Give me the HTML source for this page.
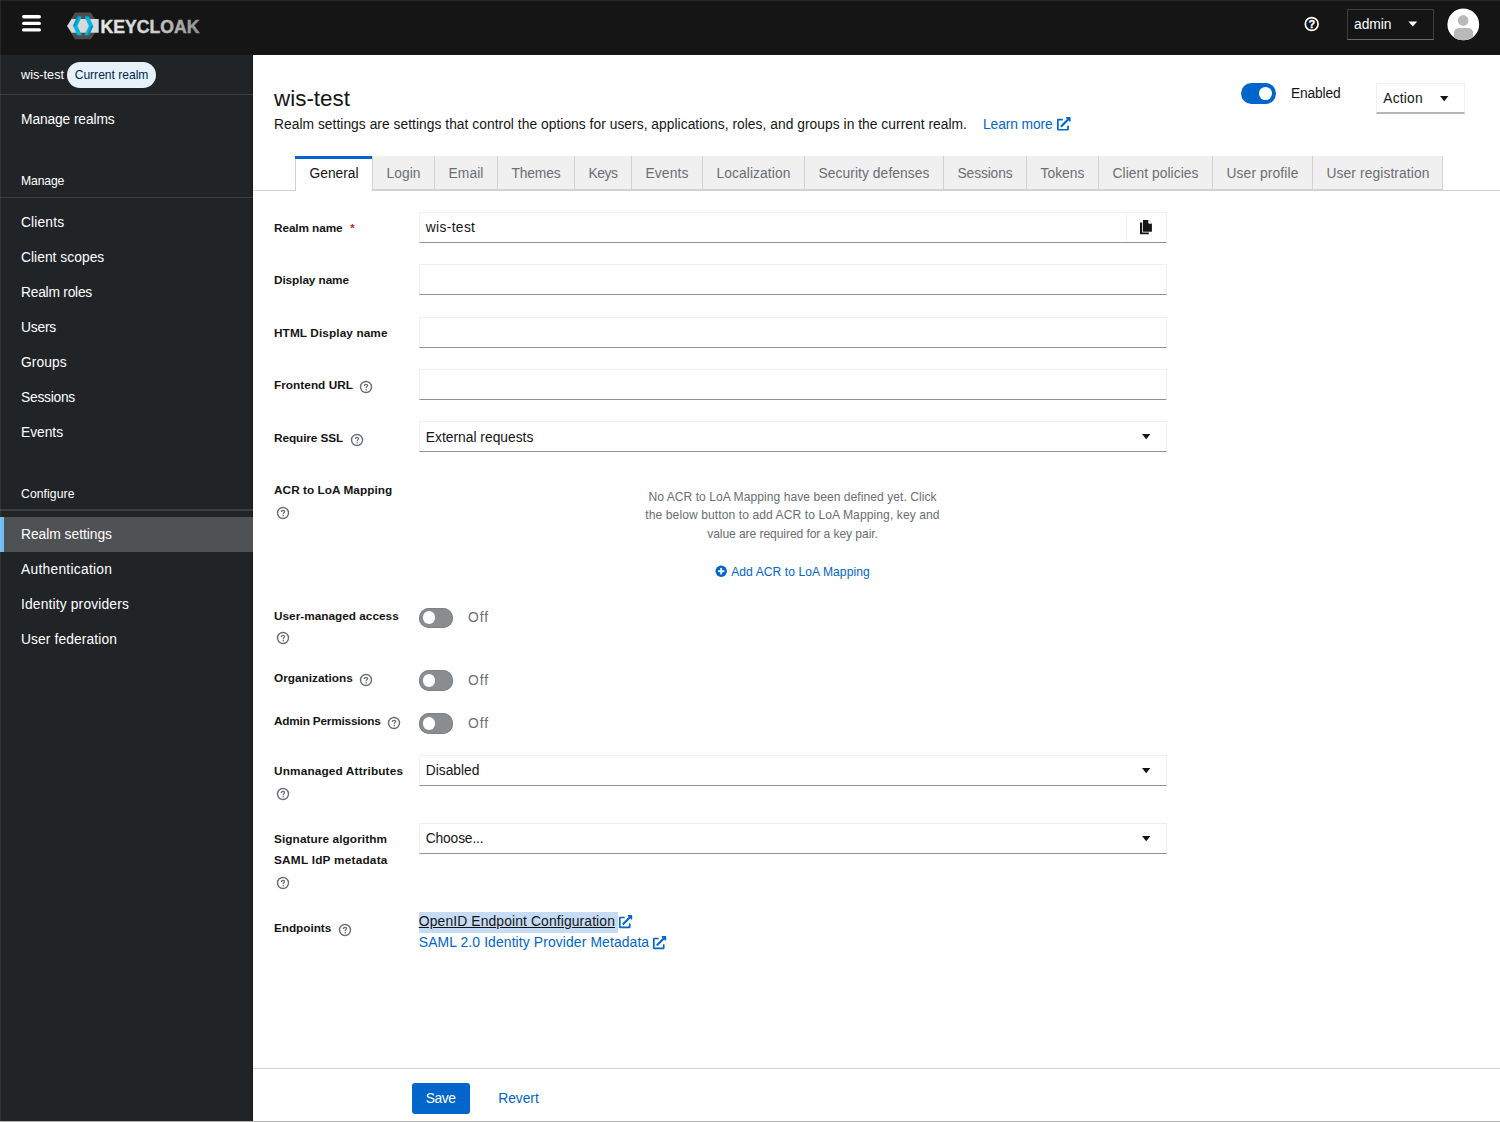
<!DOCTYPE html>
<html><head><meta charset="utf-8"><title>Keycloak - Realm settings</title>
<style>
html,body{margin:0;padding:0;width:1500px;height:1122px;overflow:hidden;background:#fff;font-family:'Liberation Sans', sans-serif}
.t{position:absolute;white-space:nowrap;font-family:'Liberation Sans', sans-serif}
svg{overflow:visible}
</style></head><body>
<div style="position:absolute;left:0px;top:0px;width:1500px;height:55px;background:#151515"></div>
<div style="position:absolute;left:0px;top:0px;width:1500px;height:1px;background:#262626"></div>
<svg style="position:absolute;left:0;top:0" width="60" height="55"><g fill="#fff"><rect x="22" y="15" width="19" height="3.4" rx="1.7"/><rect x="22" y="21.7" width="19" height="3.4" rx="1.7"/><rect x="22" y="28.2" width="19" height="3.4" rx="1.7"/></g></svg>
<svg style="position:absolute;left:60px;top:8px" width="150" height="40" viewBox="60 8 150 40">
<defs><linearGradient id="kg" x1="0" x2="1" y1="0" y2="0"><stop offset="0" stop-color="#e8e8e8"/><stop offset="0.5" stop-color="#d0d0d0"/><stop offset="1" stop-color="#909090"/></linearGradient></defs>
<polygon points="75,12.5 90.8,12.5 95,19 95,33 90.8,39.3 75,39.3 71,33 71,19" fill="#4d4d4d"/>
<polygon points="67,25.9 71.5,19 98.7,19 98.7,32.7 71.5,32.7" fill="#d9d9d9"/>
<polygon points="73,25.9 77.3,16.6 81.8,16.6 77.5,25.9 81.8,35.3 77.3,35.3" fill="#00b8e3"/>
<polygon points="93.3,25.9 89,16.6 84.5,16.6 88.8,25.9 84.5,35.3 89,35.3" fill="#00b8e3"/>
<polygon points="73,25.9 77.3,16.6 79.3,16.6 75,25.9" fill="#008fb5"/>
<polygon points="93.3,25.9 89,35.3 87,35.3 91.3,25.9" fill="#008fb5"/>
<text x="100.5" y="32.7" font-family="Liberation Sans" font-weight="bold" font-size="18.6" fill="url(#kg)" stroke="url(#kg)" stroke-width="0.45" textLength="99" lengthAdjust="spacingAndGlyphs">KEYCLOAK</text>
</svg>
<svg style="position:absolute;left:1300px;top:12px" width="24" height="24" viewBox="1300 12 24 24"><circle cx="1311.7" cy="24" r="6.4" fill="none" stroke="#fff" stroke-width="1.7"/><text x="1311.8" y="27.7" text-anchor="middle" font-family="Liberation Sans" font-weight="bold" font-size="11" fill="#fff" stroke="#fff" stroke-width="0.3">?</text></svg>
<div style="position:absolute;left:1346.5px;top:9px;width:87px;height:31px;box-sizing:border-box;border:1px solid #3c3f42;border-bottom-color:#6a6e73"></div>
<div class="t" style="left:1354px;top:15px;font-size:13.8px;line-height:20px;font-weight:normal;color:#fff;letter-spacing:-0.036px;">admin</div>
<svg style="position:absolute;left:1405px;top:19px" width="16" height="10"><polygon points="3.4,2.5 12.2,2.5 7.8,7.5" fill="#fff"/></svg>
<svg style="position:absolute;left:1445px;top:6px" width="37" height="37" viewBox="1445 6 37 37">
<defs><clipPath id="av"><circle cx="1463.3" cy="24.4" r="15.9"/></clipPath></defs>
<circle cx="1463.3" cy="24.4" r="16.6" fill="#050505"/>
<circle cx="1463.3" cy="24.4" r="15.9" fill="#fff"/>
<g clip-path="url(#av)" fill="#b9b9b9"><circle cx="1463.2" cy="20.4" r="5.3"/><path d="M1454,41 L1454,32.5 C1454,29.5 1456.5,28 1459.5,28 L1467,28 C1470.5,28 1473,29.5 1473,32.5 L1473,41 Z"/></g>
</svg>
<div style="position:absolute;left:0px;top:55px;width:253px;height:1067px;background:#212427"></div>
<div style="position:absolute;left:252px;top:55px;width:1px;height:1067px;background:#16181b"></div>
<div class="t" style="left:21px;top:65px;font-size:12.7px;line-height:20px;font-weight:normal;color:#fff;letter-spacing:0.000px;">wis-test</div>
<div style="position:absolute;left:67px;top:62px;width:89px;height:26px;background:#e7f1fa;border-radius:13px"></div>
<div class="t" style="left:74.7px;top:65px;font-size:12.1px;line-height:20px;font-weight:normal;color:#002952;letter-spacing:-0.018px;">Current realm</div>
<div style="position:absolute;left:0px;top:94px;width:253px;height:1px;background:#3c3f42"></div>
<div class="t" style="left:21px;top:110px;font-size:13.8px;line-height:20px;font-weight:normal;color:#fff;letter-spacing:-0.115px;">Manage realms</div>
<div class="t" style="left:21px;top:171px;font-size:12.2px;line-height:20px;font-weight:normal;color:#fff;letter-spacing:-0.141px;">Manage</div>
<div style="position:absolute;left:0px;top:197px;width:253px;height:1px;background:#3c3f42"></div>
<div class="t" style="left:21px;top:213px;font-size:13.8px;line-height:20px;font-weight:normal;color:#fff;letter-spacing:0.145px;">Clients</div>
<div class="t" style="left:21px;top:248px;font-size:13.8px;line-height:20px;font-weight:normal;color:#fff;letter-spacing:0.036px;">Client scopes</div>
<div class="t" style="left:21px;top:283px;font-size:13.8px;line-height:20px;font-weight:normal;color:#fff;letter-spacing:-0.237px;">Realm roles</div>
<div class="t" style="left:21px;top:318px;font-size:13.8px;line-height:20px;font-weight:normal;color:#fff;letter-spacing:-0.206px;">Users</div>
<div class="t" style="left:21px;top:353px;font-size:13.8px;line-height:20px;font-weight:normal;color:#fff;letter-spacing:0.075px;">Groups</div>
<div class="t" style="left:21px;top:388px;font-size:13.8px;line-height:20px;font-weight:normal;color:#fff;letter-spacing:-0.248px;">Sessions</div>
<div class="t" style="left:21px;top:423px;font-size:13.8px;line-height:20px;font-weight:normal;color:#fff;letter-spacing:-0.031px;">Events</div>
<div class="t" style="left:21px;top:484px;font-size:12.2px;line-height:20px;font-weight:normal;color:#fff;letter-spacing:0.082px;">Configure</div>
<div style="position:absolute;left:0px;top:509px;width:253px;height:1.5px;background:#3c3f42"></div>
<div style="position:absolute;left:0px;top:517px;width:253px;height:35px;background:#4f5255"></div>
<div style="position:absolute;left:0px;top:517px;width:4px;height:35px;background:#73bcf7"></div>
<div class="t" style="left:21px;top:525px;font-size:13.8px;line-height:20px;font-weight:normal;color:#fff;letter-spacing:-0.018px;">Realm settings</div>
<div class="t" style="left:21px;top:560px;font-size:13.8px;line-height:20px;font-weight:normal;color:#fff;letter-spacing:0.268px;">Authentication</div>
<div class="t" style="left:21px;top:595px;font-size:13.8px;line-height:20px;font-weight:normal;color:#fff;letter-spacing:0.163px;">Identity providers</div>
<div class="t" style="left:21px;top:630px;font-size:13.8px;line-height:20px;font-weight:normal;color:#fff;letter-spacing:0.110px;">User federation</div>
<div style="position:absolute;left:0px;top:0px;width:1px;height:1122px;background:rgba(255,255,255,0.07)"></div>
<div class="t" style="left:274px;top:84px;font-size:22.4px;line-height:30px;font-weight:normal;color:#151515;letter-spacing:0.014px;">wis-test</div>
<div class="t" style="left:274px;top:115px;font-size:13.8px;line-height:20px;font-weight:normal;color:#151515;letter-spacing:0.037px;">Realm settings are settings that control the options for users, applications, roles, and groups in the current realm.</div>
<div class="t" style="left:983px;top:115px;font-size:13.8px;line-height:20px;font-weight:normal;color:#0066cc;letter-spacing:-0.086px;">Learn more</div>
<svg style="position:absolute;left:1057px;top:117px" width="13.6" height="13.6" viewBox="0 0 512 512"><path fill="#0066cc" d="M432,320H400a16,16,0,0,0-16,16V448H64V128H208a16,16,0,0,0,16-16V80a16,16,0,0,0-16-16H48A48,48,0,0,0,0,112V464a48,48,0,0,0,48,48H400a48,48,0,0,0,48-48V336A16,16,0,0,0,432,320ZM488,0h-128c-21.37,0-32.05,25.91-17,41l35.73,35.730L135,320.37a24,24,0,0,0,0,34L157.67,377a24,24,0,0,0,34,0L435.28,133.32,471,169c15,15,41,4.5,41-17V24A24,24,0,0,0,488,0Z"/></svg>
<div style="position:absolute;left:1241px;top:83px;width:35px;height:21px;background:#0066cc;border-radius:10.5px"></div>
<div style="position:absolute;left:1259px;top:87.1px;width:12.8px;height:12.8px;background:#fff;border-radius:50%"></div>
<div class="t" style="left:1291px;top:84px;font-size:13.8px;line-height:20px;font-weight:normal;color:#151515;letter-spacing:-0.163px;">Enabled</div>
<div style="position:absolute;left:1376.3px;top:83.3px;width:88.7px;height:31px;box-sizing:border-box;border:1px solid #f0f0f0;border-bottom:2px solid #b4b6b9"></div>
<div class="t" style="left:1383.3px;top:89px;font-size:13.8px;line-height:20px;font-weight:normal;color:#151515;letter-spacing:0.190px;">Action</div>
<svg style="position:absolute;left:1440.2px;top:95.6px" width="8.4" height="5.4" viewBox="0 0 8.4 5.4"><polygon points="0,0 8.4,0 4.2,5.2" fill="#151515"/></svg>
<div style="position:absolute;left:253px;top:189.5px;width:1247px;height:1px;background:#d2d2d2"></div>
<div style="position:absolute;left:295px;top:156px;width:77px;height:35px;background:#fff;box-sizing:border-box;border-left:1px solid #d2d2d2"></div>
<div style="position:absolute;left:295px;top:156px;width:77px;height:2.6px;background:#0066cc"></div>
<div class="t" style="left:275.5px;width:117px;top:164px;font-size:13.8px;line-height:20px;font-weight:normal;color:#151515;text-align:center;letter-spacing:-0.013px;">General</div>
<div style="position:absolute;left:372px;top:156px;width:62px;height:34px;background:#f0f0f0;box-sizing:border-box;border-left:1px solid #d2d2d2;border-bottom:1px solid #d2d2d2"></div>
<div class="t" style="left:352.5px;width:102px;top:164px;font-size:13.8px;line-height:20px;font-weight:normal;color:#6a6e73;text-align:center;letter-spacing:0.047px;">Login</div>
<div style="position:absolute;left:434px;top:156px;width:63px;height:34px;background:#f0f0f0;box-sizing:border-box;border-left:1px solid #d2d2d2;border-bottom:1px solid #d2d2d2"></div>
<div class="t" style="left:414.5px;width:103px;top:164px;font-size:13.8px;line-height:20px;font-weight:normal;color:#6a6e73;text-align:center;letter-spacing:0.100px;">Email</div>
<div style="position:absolute;left:497px;top:156px;width:77px;height:34px;background:#f0f0f0;box-sizing:border-box;border-left:1px solid #d2d2d2;border-bottom:1px solid #d2d2d2"></div>
<div class="t" style="left:477.5px;width:117px;top:164px;font-size:13.8px;line-height:20px;font-weight:normal;color:#6a6e73;text-align:center;letter-spacing:-0.141px;">Themes</div>
<div style="position:absolute;left:574px;top:156px;width:57px;height:34px;background:#f0f0f0;box-sizing:border-box;border-left:1px solid #d2d2d2;border-bottom:1px solid #d2d2d2"></div>
<div class="t" style="left:554.5px;width:97px;top:164px;font-size:13.8px;line-height:20px;font-weight:normal;color:#6a6e73;text-align:center;letter-spacing:-0.422px;">Keys</div>
<div style="position:absolute;left:631px;top:156px;width:71px;height:34px;background:#f0f0f0;box-sizing:border-box;border-left:1px solid #d2d2d2;border-bottom:1px solid #d2d2d2"></div>
<div class="t" style="left:611.5px;width:111px;top:164px;font-size:13.8px;line-height:20px;font-weight:normal;color:#6a6e73;text-align:center;letter-spacing:0.135px;">Events</div>
<div style="position:absolute;left:702px;top:156px;width:102px;height:34px;background:#f0f0f0;box-sizing:border-box;border-left:1px solid #d2d2d2;border-bottom:1px solid #d2d2d2"></div>
<div class="t" style="left:682.5px;width:142px;top:164px;font-size:13.8px;line-height:20px;font-weight:normal;color:#6a6e73;text-align:center;letter-spacing:0.094px;">Localization</div>
<div style="position:absolute;left:804px;top:156px;width:139px;height:34px;background:#f0f0f0;box-sizing:border-box;border-left:1px solid #d2d2d2;border-bottom:1px solid #d2d2d2"></div>
<div class="t" style="left:784.5px;width:179px;top:164px;font-size:13.8px;line-height:20px;font-weight:normal;color:#6a6e73;text-align:center;letter-spacing:0.078px;">Security defenses</div>
<div style="position:absolute;left:943px;top:156px;width:83px;height:34px;background:#f0f0f0;box-sizing:border-box;border-left:1px solid #d2d2d2;border-bottom:1px solid #d2d2d2"></div>
<div class="t" style="left:923.5px;width:123px;top:164px;font-size:13.8px;line-height:20px;font-weight:normal;color:#6a6e73;text-align:center;letter-spacing:-0.123px;">Sessions</div>
<div style="position:absolute;left:1026px;top:156px;width:72px;height:34px;background:#f0f0f0;box-sizing:border-box;border-left:1px solid #d2d2d2;border-bottom:1px solid #d2d2d2"></div>
<div class="t" style="left:1006.5px;width:112px;top:164px;font-size:13.8px;line-height:20px;font-weight:normal;color:#6a6e73;text-align:center;letter-spacing:0.047px;">Tokens</div>
<div style="position:absolute;left:1098px;top:156px;width:114px;height:34px;background:#f0f0f0;box-sizing:border-box;border-left:1px solid #d2d2d2;border-bottom:1px solid #d2d2d2"></div>
<div class="t" style="left:1078.5px;width:154px;top:164px;font-size:13.8px;line-height:20px;font-weight:normal;color:#6a6e73;text-align:center;letter-spacing:0.058px;">Client policies</div>
<div style="position:absolute;left:1212px;top:156px;width:100px;height:34px;background:#f0f0f0;box-sizing:border-box;border-left:1px solid #d2d2d2;border-bottom:1px solid #d2d2d2"></div>
<div class="t" style="left:1192.5px;width:140px;top:164px;font-size:13.8px;line-height:20px;font-weight:normal;color:#6a6e73;text-align:center;letter-spacing:0.121px;">User profile</div>
<div style="position:absolute;left:1312px;top:156px;width:131px;height:34px;background:#f0f0f0;box-sizing:border-box;border-left:1px solid #d2d2d2;border-bottom:1px solid #d2d2d2"></div>
<div class="t" style="left:1292.5px;width:171px;top:164px;font-size:13.8px;line-height:20px;font-weight:normal;color:#6a6e73;text-align:center;letter-spacing:0.105px;">User registration</div>
<div style="position:absolute;left:1442px;top:156px;width:1px;height:34px;background:#d2d2d2"></div>
<div class="t" style="left:274px;top:218px;font-size:11.8px;line-height:20px;font-weight:bold;color:#151515;letter-spacing:-0.102px;">Realm name</div>
<div class="t" style="left:350.3px;top:218px;font-size:11px;line-height:20px;font-weight:bold;color:#c9190b;">*</div>
<div style="position:absolute;left:418.7px;top:212.0px;width:748.2px;height:31px;box-sizing:border-box;border:1px solid #f0f0f0;border-bottom:1px solid #8f9295"></div>
<div style="position:absolute;left:1125.5px;top:212.5px;width:1px;height:29.5px;background:#f0f0f0"></div>
<svg style="position:absolute;left:1139px;top:219px" width="15" height="16" viewBox="0 0 15 16"><path d="M4,1 h5.6 l3.3,3.3 v8.5 h-8.9 z" fill="#151515"/><path d="M9.8,1.2 v3 h3" fill="#fff" stroke="#fff" stroke-width="0.9"/><path d="M1,3.6 h2.2 v9.8 h6.6 v1.9 h-8.8 z" fill="#151515"/></svg>
<div class="t" style="left:425.8px;top:218px;font-size:13.8px;line-height:20px;font-weight:normal;color:#151515;letter-spacing:0.342px;">wis-test</div>
<div class="t" style="left:274px;top:270px;font-size:11.8px;line-height:20px;font-weight:bold;color:#151515;letter-spacing:-0.089px;">Display name</div>
<div style="position:absolute;left:418.7px;top:264.3px;width:748.2px;height:31px;box-sizing:border-box;border:1px solid #f0f0f0;border-bottom:1px solid #8f9295"></div>
<div class="t" style="left:274px;top:323px;font-size:11.8px;line-height:20px;font-weight:bold;color:#151515;letter-spacing:0.101px;">HTML Display name</div>
<div style="position:absolute;left:418.7px;top:316.5px;width:748.2px;height:31px;box-sizing:border-box;border:1px solid #f0f0f0;border-bottom:1px solid #8f9295"></div>
<div class="t" style="left:274px;top:375px;font-size:11.8px;line-height:20px;font-weight:bold;color:#151515;letter-spacing:0.030px;">Frontend URL</div>
<svg style="position:absolute;left:359.2px;top:379.79999999999995px" width="14" height="14" viewBox="0 0 14 14"><circle cx="7" cy="7" r="5.5" fill="none" stroke="#6a6e73" stroke-width="1.4"/><path d="M5.4,5.9 C5.4,4.9 6.1,4.3 7,4.3 C7.9,4.3 8.6,4.9 8.6,5.6 C8.6,6.6 7.3,6.8 7.2,7.7 L7.2,8.2" fill="none" stroke="#6a6e73" stroke-width="1.3"/><circle cx="7.2" cy="9.7" r="0.8" fill="#6a6e73"/></svg>
<div style="position:absolute;left:418.7px;top:368.8px;width:748.2px;height:31px;box-sizing:border-box;border:1px solid #f0f0f0;border-bottom:1px solid #8f9295"></div>
<div class="t" style="left:274px;top:428px;font-size:11.8px;line-height:20px;font-weight:bold;color:#151515;letter-spacing:-0.087px;">Require SSL</div>
<svg style="position:absolute;left:349.8px;top:432.59999999999997px" width="14" height="14" viewBox="0 0 14 14"><circle cx="7" cy="7" r="5.5" fill="none" stroke="#6a6e73" stroke-width="1.4"/><path d="M5.4,5.9 C5.4,4.9 6.1,4.3 7,4.3 C7.9,4.3 8.6,4.9 8.6,5.6 C8.6,6.6 7.3,6.8 7.2,7.7 L7.2,8.2" fill="none" stroke="#6a6e73" stroke-width="1.3"/><circle cx="7.2" cy="9.7" r="0.8" fill="#6a6e73"/></svg>
<div style="position:absolute;left:418.7px;top:421.3px;width:748.2px;height:31px;box-sizing:border-box;border:1px solid #f0f0f0;border-bottom:1px solid #8f9295"></div>
<div class="t" style="left:425.8px;top:428px;font-size:13.8px;line-height:20px;font-weight:normal;color:#151515;letter-spacing:0.013px;">External requests</div>
<svg style="position:absolute;left:1141.9px;top:434px" width="8.4" height="5.4" viewBox="0 0 8.4 5.4"><polygon points="0,0 8.4,0 4.2,5.2" fill="#151515"/></svg>
<div class="t" style="left:274px;top:480px;font-size:11.8px;line-height:20px;font-weight:bold;color:#151515;letter-spacing:0.044px;">ACR to LoA Mapping</div>
<svg style="position:absolute;left:276.4px;top:505.5px" width="14" height="14" viewBox="0 0 14 14"><circle cx="7" cy="7" r="5.5" fill="none" stroke="#6a6e73" stroke-width="1.4"/><path d="M5.4,5.9 C5.4,4.9 6.1,4.3 7,4.3 C7.9,4.3 8.6,4.9 8.6,5.6 C8.6,6.6 7.3,6.8 7.2,7.7 L7.2,8.2" fill="none" stroke="#6a6e73" stroke-width="1.3"/><circle cx="7.2" cy="9.7" r="0.8" fill="#6a6e73"/></svg>
<div class="t" style="left:492.5px;width:600px;top:487px;font-size:12.1px;line-height:20px;font-weight:normal;color:#6a6e73;text-align:center;letter-spacing:0.036px;">No ACR to LoA Mapping have been defined yet. Click</div>
<div class="t" style="left:492.5px;width:600px;top:505px;font-size:12.1px;line-height:20px;font-weight:normal;color:#6a6e73;text-align:center;letter-spacing:0.077px;">the below button to add ACR to LoA Mapping, key and</div>
<div class="t" style="left:492.5px;width:600px;top:524px;font-size:12.1px;line-height:20px;font-weight:normal;color:#6a6e73;text-align:center;letter-spacing:-0.084px;">value are required for a key pair.</div>
<svg style="position:absolute;left:714.8px;top:564.8px" width="12.4" height="12.4" viewBox="0 0 13 13"><circle cx="6.5" cy="6.5" r="6" fill="#0066cc"/><rect x="5.55" y="3.1" width="1.9" height="6.8" fill="#fff"/><rect x="3.1" y="5.55" width="6.8" height="1.9" fill="#fff"/></svg>
<div class="t" style="left:731.2px;top:562px;font-size:12.1px;line-height:20px;font-weight:normal;color:#0066cc;letter-spacing:0.066px;">Add ACR to LoA Mapping</div>
<div class="t" style="left:274px;top:606px;font-size:11.8px;line-height:20px;font-weight:bold;color:#151515;letter-spacing:0.006px;">User-managed access</div>
<svg style="position:absolute;left:276.4px;top:630.8px" width="14" height="14" viewBox="0 0 14 14"><circle cx="7" cy="7" r="5.5" fill="none" stroke="#6a6e73" stroke-width="1.4"/><path d="M5.4,5.9 C5.4,4.9 6.1,4.3 7,4.3 C7.9,4.3 8.6,4.9 8.6,5.6 C8.6,6.6 7.3,6.8 7.2,7.7 L7.2,8.2" fill="none" stroke="#6a6e73" stroke-width="1.3"/><circle cx="7.2" cy="9.7" r="0.8" fill="#6a6e73"/></svg>
<div style="position:absolute;left:418.8px;top:607.5px;width:34.6px;height:20.5px;background:#8a8d90;border-radius:10.25px;box-shadow:inset 0 0 0 0.8px #7a7d80"></div>
<div style="position:absolute;left:422.6px;top:611.35px;width:12.8px;height:12.8px;background:#fff;border-radius:50%"></div>
<div class="t" style="left:468px;top:608px;font-size:13.8px;line-height:20px;font-weight:normal;color:#6a6e73;letter-spacing:0.948px;">Off</div>
<div class="t" style="left:274px;top:668px;font-size:11.8px;line-height:20px;font-weight:bold;color:#151515;letter-spacing:0.003px;">Organizations</div>
<svg style="position:absolute;left:359.4px;top:672.9px" width="14" height="14" viewBox="0 0 14 14"><circle cx="7" cy="7" r="5.5" fill="none" stroke="#6a6e73" stroke-width="1.4"/><path d="M5.4,5.9 C5.4,4.9 6.1,4.3 7,4.3 C7.9,4.3 8.6,4.9 8.6,5.6 C8.6,6.6 7.3,6.8 7.2,7.7 L7.2,8.2" fill="none" stroke="#6a6e73" stroke-width="1.3"/><circle cx="7.2" cy="9.7" r="0.8" fill="#6a6e73"/></svg>
<div style="position:absolute;left:418.8px;top:670.2px;width:34.6px;height:20.5px;background:#8a8d90;border-radius:10.25px;box-shadow:inset 0 0 0 0.8px #7a7d80"></div>
<div style="position:absolute;left:422.6px;top:674.0500000000001px;width:12.8px;height:12.8px;background:#fff;border-radius:50%"></div>
<div class="t" style="left:468px;top:671px;font-size:13.8px;line-height:20px;font-weight:normal;color:#6a6e73;letter-spacing:0.948px;">Off</div>
<div class="t" style="left:274px;top:711px;font-size:11.8px;line-height:20px;font-weight:bold;color:#151515;letter-spacing:-0.202px;">Admin Permissions</div>
<svg style="position:absolute;left:387.2px;top:715.6px" width="14" height="14" viewBox="0 0 14 14"><circle cx="7" cy="7" r="5.5" fill="none" stroke="#6a6e73" stroke-width="1.4"/><path d="M5.4,5.9 C5.4,4.9 6.1,4.3 7,4.3 C7.9,4.3 8.6,4.9 8.6,5.6 C8.6,6.6 7.3,6.8 7.2,7.7 L7.2,8.2" fill="none" stroke="#6a6e73" stroke-width="1.3"/><circle cx="7.2" cy="9.7" r="0.8" fill="#6a6e73"/></svg>
<div style="position:absolute;left:418.8px;top:713px;width:34.6px;height:20.5px;background:#8a8d90;border-radius:10.25px;box-shadow:inset 0 0 0 0.8px #7a7d80"></div>
<div style="position:absolute;left:422.6px;top:716.85px;width:12.8px;height:12.8px;background:#fff;border-radius:50%"></div>
<div class="t" style="left:468px;top:714px;font-size:13.8px;line-height:20px;font-weight:normal;color:#6a6e73;letter-spacing:0.948px;">Off</div>
<div class="t" style="left:274px;top:761px;font-size:11.8px;line-height:20px;font-weight:bold;color:#151515;letter-spacing:0.152px;">Unmanaged Attributes</div>
<svg style="position:absolute;left:276.4px;top:786.6px" width="14" height="14" viewBox="0 0 14 14"><circle cx="7" cy="7" r="5.5" fill="none" stroke="#6a6e73" stroke-width="1.4"/><path d="M5.4,5.9 C5.4,4.9 6.1,4.3 7,4.3 C7.9,4.3 8.6,4.9 8.6,5.6 C8.6,6.6 7.3,6.8 7.2,7.7 L7.2,8.2" fill="none" stroke="#6a6e73" stroke-width="1.3"/><circle cx="7.2" cy="9.7" r="0.8" fill="#6a6e73"/></svg>
<div style="position:absolute;left:418.7px;top:754.7px;width:748.2px;height:31px;box-sizing:border-box;border:1px solid #f0f0f0;border-bottom:1px solid #8f9295"></div>
<div class="t" style="left:425.8px;top:761px;font-size:13.8px;line-height:20px;font-weight:normal;color:#151515;letter-spacing:-0.011px;">Disabled</div>
<svg style="position:absolute;left:1141.9px;top:767.5px" width="8.4" height="5.4" viewBox="0 0 8.4 5.4"><polygon points="0,0 8.4,0 4.2,5.2" fill="#151515"/></svg>
<div class="t" style="left:274px;top:829px;font-size:11.8px;line-height:20px;font-weight:bold;color:#151515;letter-spacing:0.087px;">Signature algorithm</div>
<div class="t" style="left:274px;top:850px;font-size:11.8px;line-height:20px;font-weight:bold;color:#151515;letter-spacing:0.229px;">SAML IdP metadata</div>
<svg style="position:absolute;left:276.4px;top:876.1999999999999px" width="14" height="14" viewBox="0 0 14 14"><circle cx="7" cy="7" r="5.5" fill="none" stroke="#6a6e73" stroke-width="1.4"/><path d="M5.4,5.9 C5.4,4.9 6.1,4.3 7,4.3 C7.9,4.3 8.6,4.9 8.6,5.6 C8.6,6.6 7.3,6.8 7.2,7.7 L7.2,8.2" fill="none" stroke="#6a6e73" stroke-width="1.3"/><circle cx="7.2" cy="9.7" r="0.8" fill="#6a6e73"/></svg>
<div style="position:absolute;left:418.7px;top:823.3px;width:748.2px;height:31px;box-sizing:border-box;border:1px solid #f0f0f0;border-bottom:1px solid #8f9295"></div>
<div class="t" style="left:425.8px;top:829px;font-size:13.8px;line-height:20px;font-weight:normal;color:#151515;letter-spacing:-0.162px;">Choose...</div>
<svg style="position:absolute;left:1141.9px;top:835.5px" width="8.4" height="5.4" viewBox="0 0 8.4 5.4"><polygon points="0,0 8.4,0 4.2,5.2" fill="#151515"/></svg>
<div class="t" style="left:274px;top:918px;font-size:11.8px;line-height:20px;font-weight:bold;color:#151515;letter-spacing:-0.052px;">Endpoints</div>
<svg style="position:absolute;left:337.5px;top:922.6px" width="14" height="14" viewBox="0 0 14 14"><circle cx="7" cy="7" r="5.5" fill="none" stroke="#6a6e73" stroke-width="1.4"/><path d="M5.4,5.9 C5.4,4.9 6.1,4.3 7,4.3 C7.9,4.3 8.6,4.9 8.6,5.6 C8.6,6.6 7.3,6.8 7.2,7.7 L7.2,8.2" fill="none" stroke="#6a6e73" stroke-width="1.3"/><circle cx="7.2" cy="9.7" r="0.8" fill="#6a6e73"/></svg>
<div style="position:absolute;left:418.8px;top:912px;width:199.6px;height:20.5px;background:#c6dcf5"></div>
<div class="t" style="left:418.8px;top:911px;font-size:13.9px;line-height:20px;font-weight:normal;color:#151515;text-decoration:underline;text-underline-offset:1px;letter-spacing:0.108px;">OpenID Endpoint Configuration</div>
<svg style="position:absolute;left:619.2px;top:914.6px" width="13.2" height="13.2" viewBox="0 0 512 512"><path fill="#0066cc" d="M432,320H400a16,16,0,0,0-16,16V448H64V128H208a16,16,0,0,0,16-16V80a16,16,0,0,0-16-16H48A48,48,0,0,0,0,112V464a48,48,0,0,0,48,48H400a48,48,0,0,0,48-48V336A16,16,0,0,0,432,320ZM488,0h-128c-21.37,0-32.05,25.91-17,41l35.73,35.730L135,320.37a24,24,0,0,0,0,34L157.67,377a24,24,0,0,0,34,0L435.28,133.32,471,169c15,15,41,4.5,41-17V24A24,24,0,0,0,488,0Z"/></svg>
<div class="t" style="left:418.8px;top:932px;font-size:13.9px;line-height:20px;font-weight:normal;color:#0066cc;letter-spacing:0.112px;">SAML 2.0 Identity Provider Metadata</div>
<svg style="position:absolute;left:653.4px;top:935.6px" width="13.2" height="13.2" viewBox="0 0 512 512"><path fill="#0066cc" d="M432,320H400a16,16,0,0,0-16,16V448H64V128H208a16,16,0,0,0,16-16V80a16,16,0,0,0-16-16H48A48,48,0,0,0,0,112V464a48,48,0,0,0,48,48H400a48,48,0,0,0,48-48V336A16,16,0,0,0,432,320ZM488,0h-128c-21.37,0-32.05,25.91-17,41l35.73,35.730L135,320.37a24,24,0,0,0,0,34L157.67,377a24,24,0,0,0,34,0L435.28,133.32,471,169c15,15,41,4.5,41-17V24A24,24,0,0,0,488,0Z"/></svg>
<div style="position:absolute;left:253px;top:1068px;width:1247px;height:1px;background:#d2d2d2"></div>
<div style="position:absolute;left:411.7px;top:1082.7px;width:58.3px;height:31.3px;background:#0066cc;border-radius:3px"></div>
<div class="t" style="left:425.7px;top:1089px;font-size:13.8px;line-height:20px;font-weight:normal;color:#fff;letter-spacing:-0.363px;">Save</div>
<div class="t" style="left:498.3px;top:1089px;font-size:13.8px;line-height:20px;font-weight:normal;color:#0066cc;letter-spacing:-0.040px;">Revert</div>
<div style="position:absolute;left:0px;top:1121px;width:1500px;height:1px;background:#b0b0b0"></div>
</body></html>
